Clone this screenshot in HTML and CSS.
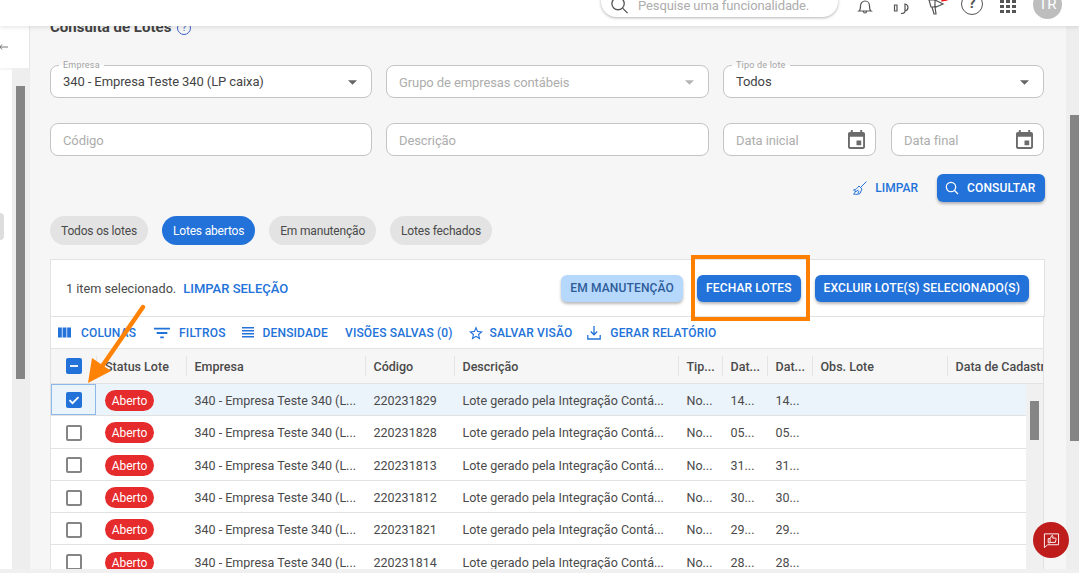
FILE: index.html
```html
<!DOCTYPE html>
<html lang="pt-BR">
<head>
    <meta charset="UTF-8">
    <title>Consulta de Lotes</title>
    <link rel="stylesheet" href="styles.css">
</head>
<body>
    <header class="topbar">
        <div class="search-box">
            <svg class="search-icon" viewBox="0 0 20 20"><circle cx="8.5" cy="8" r="6.5"/><path d="M13.5 13l5 5"/></svg>
            <span>Pesquise uma funcionalidade.</span>
        </div>
        <svg class="top-icon bell" viewBox="0 0 16 14"><path d="M2 11c1.500-1 1.500-3 1.500-5 0-3 2-5 4.500-5s4.500 2 4.500 5c0 2 0 4 1.500 5zM6.500 11.500c0 2 3 2 3 0"/></svg>
        <svg class="top-icon headset" viewBox="0 0 16 14"><path d="M1.500 5h2.500v6H1.500zM12 4c2 .5 3 2 3 3.500s-1 3-3 3.500zM12 11c0 2-2 2.500-4 2.500"/></svg>
        <svg class="top-icon horn" viewBox="0 0 22 15"><path d="M1 0h6v6l-1 1H3zM7 0l8 4v0l-7 3-1-1M4 7l2 7h2l-1-7"/><path class="horn-dot" d="M14 1l5-1v-1h-5z"/></svg>
        <div class="help">?</div>
        <svg class="apps" viewBox="0 0 16 13"><path d="M0 0h4v3H0zM6 0h4v3H6zM12 0h4v3h-4zM0 5h4v3H0zM6 5h4v3H6zM12 5h4v3h-4zM0 10h4v3H0zM6 10h4v3H6zM12 10h4v3h-4z"/></svg>
        <div class="avatar">TR</div>
    </header>

    <div class="page">
        <aside class="sidebar">
            <div class="side-head">
                <svg class="back-icon" viewBox="0 0 8 8"><path d="M0 4h8M2 1.500L0 4l2 2.500"/></svg>
            </div>
            <div class="side-body">
                <div class="side-list"><span class="side-item"></span></div>
                <div class="side-track"><div class="side-thumb"></div></div>
            </div>
        </aside>

        <main class="content">
            <h1 class="title">Consulta de Lotes <span class="info">?</span></h1>

            <div class="form-row">
                <div class="field">
                    <label>Empresa</label>
                    <span class="value">340 - Empresa Teste 340 (LP caixa)</span>
                    <svg class="caret" viewBox="0 0 10 5"><path d="M0 0h10L5 5z"/></svg>
                </div>
                <div class="field">
                    <span class="placeholder">Grupo de empresas contábeis</span>
                    <svg class="caret muted" viewBox="0 0 10 5"><path d="M0 0h10L5 5z"/></svg>
                </div>
                <div class="field">
                    <label>Tipo de lote</label>
                    <span class="value">Todos</span>
                    <svg class="caret" viewBox="0 0 10 5"><path d="M0 0h10L5 5z"/></svg>
                </div>
            </div>

            <div class="form-row">
                <div class="field"><span class="placeholder">Código</span></div>
                <div class="field"><span class="placeholder">Descrição</span></div>
                <div class="date-pair">
                    <div class="field">
                        <span class="placeholder">Data inicial</span>
                        <svg class="calendar" viewBox="3 1 18 20"><path d="M17 12h-5v5h5v-5zM16 1v2H8V1H6v2H5c-1.110 0-1.990.9-1.990 2L3 19c0 1.100.89 2 2 2h14c1.100 0 2-.9 2-2V5c0-1.100-.9-2-2-2h-1V1h-2zm3 18H5V8h14v11z"/></svg>
                    </div>
                    <div class="field">
                        <span class="placeholder">Data final</span>
                        <svg class="calendar" viewBox="3 1 18 20"><path d="M17 12h-5v5h5v-5zM16 1v2H8V1H6v2H5c-1.110 0-1.990.9-1.990 2L3 19c0 1.100.89 2 2 2h14c1.100 0 2-.9 2-2V5c0-1.100-.9-2-2-2h-1V1h-2zm3 18H5V8h14v11z"/></svg>
                    </div>
                </div>
            </div>

            <div class="form-actions">
                <a class="clear-link">
                    <svg class="broom" viewBox="0 0 14 14"><path d="M13.500.5L8 6M6 5l3 3-2 4.500c-2 1-4 1-6.500.5 1.200-.8 2-1.800 2.300-3-1 0-1.800-.2-2.300-1 2.500 0 4-2.500 5.500-4zM3 10.500l2.500-1.500M5 12.500l1-2.500"/></svg>
                    LIMPAR
                </a>
                <button class="btn btn-search">
                    <svg class="btn-icon" viewBox="0 0 14 14"><circle cx="6" cy="6" r="4.700"/><path d="M9.500 9.500L13 13"/></svg>
                    CONSULTAR
                </button>
            </div>

            <div class="chips">
                <span class="chip">Todos os lotes</span>
                <span class="chip active">Lotes abertos</span>
                <span class="chip">Em manutenção</span>
                <span class="chip">Lotes fechados</span>
            </div>

            <div class="selection-bar">
                <span class="selected-text">1 item selecionado.</span>
                <a class="clear-selection">LIMPAR SELEÇÃO</a>
                <div class="bulk-actions">
                    <button class="btn btn-light">EM MANUTENÇÃO</button>
                    <button class="btn">FECHAR LOTES</button>
                    <button class="btn">EXCLUIR LOTE(S) SELECIONADO(S)</button>
                </div>
            </div>

            <div class="grid">
                <div class="toolbar">
                    <a class="tool tool-columns"><svg viewBox="4 5 17 13"><path d="M10 18h5V5h-5v13zm-6 0h5V5H4v13zM16 5v13h5V5h-5z"/></svg>COLUNAS</a>
                    <a class="tool tool-filter"><svg viewBox="3 6 18 12"><path d="M10 18h4v-2h-4v2zM3 6v2h18V6H3zm3 7h12v-2H6v2z"/></svg>FILTROS</a>
                    <a class="tool tool-density"><svg viewBox="0 0 12 11"><path d="M0 0h12v1.400H0zM0 3h12v1.400H0zM0 6h12v1.400H0zM0 9h12v1.400H0z"/></svg>DENSIDADE</a>
                    <a class="tool tool-views">VISÕES SALVAS (0)</a>
                    <a class="tool tool-star"><svg viewBox="2 2 20 19"><path d="M22 9.240l-7.190-.62L12 2 9.190 8.630 2 9.240l5.460 4.730L5.820 21 12 17.270 18.180 21l-1.630-7.030L22 9.240zM12 15.400l-3.760 2.270 1-4.280-3.320-2.880 4.380-.38L12 6.100l1.710 4.040 4.380.38-3.320 2.880 1 4.280L12 15.400z"/></svg>SALVAR VISÃO</a>
                    <a class="tool tool-report"><svg viewBox="0 0 14 14"><path class="line" d="M7 0v8.500M3.800 5.500L7 8.800l3.200-3.300M.8 9v4h12.400V9"/></svg>GERAR RELATÓRIO</a>
                </div>

                <div class="grid-head">
                    <div class="cell c-check"><span class="box box-on"><svg viewBox="0 0 16 16"><path class="mark" d="M4 8h8"/></svg></span></div>
                    <div class="cell c-status">Status Lote</div>
                    <div class="cell c-company">Empresa</div>
                    <div class="cell c-code">Código</div>
                    <div class="cell c-desc">Descrição</div>
                    <div class="cell c-type">Tip...</div>
                    <div class="cell c-date">Dat...</div>
                    <div class="cell c-date">Dat...</div>
                    <div class="cell c-obs">Obs. Lote</div>
                    <div class="cell c-created">Data de Cadastro</div>
                </div>

                <div class="grid-body">
                    <div class="rows">
                        <div class="row selected">
                            <div class="cell c-check focused"><span class="box box-on"><svg viewBox="0 0 16 16"><path class="mark" d="M3.500 8.200l3 3 6-6"/></svg></span></div>
                            <div class="cell c-status"><span class="badge">Aberto</span></div>
                            <div class="cell c-company">340 - Empresa Teste 340 (L...</div>
                            <div class="cell c-code">220231829</div>
                            <div class="cell c-desc">Lote gerado pela Integração Contá...</div>
                            <div class="cell c-type">No...</div>
                            <div class="cell c-date">14...</div>
                            <div class="cell c-date">14...</div>
                        </div>
                        <div class="row">
                            <div class="cell c-check"><span class="box"></span></div>
                            <div class="cell c-status"><span class="badge">Aberto</span></div>
                            <div class="cell c-company">340 - Empresa Teste 340 (L...</div>
                            <div class="cell c-code">220231828</div>
                            <div class="cell c-desc">Lote gerado pela Integração Contá...</div>
                            <div class="cell c-type">No...</div>
                            <div class="cell c-date">05...</div>
                            <div class="cell c-date">05...</div>
                        </div>
                        <div class="row">
                            <div class="cell c-check"><span class="box"></span></div>
                            <div class="cell c-status"><span class="badge">Aberto</span></div>
                            <div class="cell c-company">340 - Empresa Teste 340 (L...</div>
                            <div class="cell c-code">220231813</div>
                            <div class="cell c-desc">Lote gerado pela Integração Contá...</div>
                            <div class="cell c-type">No...</div>
                            <div class="cell c-date">31...</div>
                            <div class="cell c-date">31...</div>
                        </div>
                        <div class="row">
                            <div class="cell c-check"><span class="box"></span></div>
                            <div class="cell c-status"><span class="badge">Aberto</span></div>
                            <div class="cell c-company">340 - Empresa Teste 340 (L...</div>
                            <div class="cell c-code">220231812</div>
                            <div class="cell c-desc">Lote gerado pela Integração Contá...</div>
                            <div class="cell c-type">No...</div>
                            <div class="cell c-date">30...</div>
                            <div class="cell c-date">30...</div>
                        </div>
                        <div class="row">
                            <div class="cell c-check"><span class="box"></span></div>
                            <div class="cell c-status"><span class="badge">Aberto</span></div>
                            <div class="cell c-company">340 - Empresa Teste 340 (L...</div>
                            <div class="cell c-code">220231821</div>
                            <div class="cell c-desc">Lote gerado pela Integração Contá...</div>
                            <div class="cell c-type">No...</div>
                            <div class="cell c-date">29...</div>
                            <div class="cell c-date">29...</div>
                        </div>
                        <div class="row">
                            <div class="cell c-check"><span class="box"></span></div>
                            <div class="cell c-status"><span class="badge">Aberto</span></div>
                            <div class="cell c-company">340 - Empresa Teste 340 (L...</div>
                            <div class="cell c-code">220231814</div>
                            <div class="cell c-desc">Lote gerado pela Integração Contá...</div>
                            <div class="cell c-type">No...</div>
                            <div class="cell c-date">28...</div>
                            <div class="cell c-date">28...</div>
                        </div>
                    </div>
                    <div class="grid-track"><div class="grid-thumb"></div></div>
                </div>
            </div>
        </main>

        <div class="page-track"><div class="page-thumb"></div></div>
    </div>

    <div class="bottom-strip"></div>

    <!-- marks drawn over the screen -->
    <div class="highlight"></div>
    <svg class="arrow" viewBox="0 0 70 90">
        <path class="arrow-line" d="M58 4L18 62"/>
        <path class="arrow-head" d="M3 80L7 55L26 68z"/>
    </svg>

    <div class="chat-fab">
        <svg viewBox="0 0 18 18"><path class="line" d="M1.500 2h15v11.500H5L1.500 16.500z"/><path class="line" d="M5.500 7h2v4.500h-2zM7.500 7l2-3.500c1 0 1.200 1 .8 3h3c.7 0 .7 1 .5 1.500l-.8 3h-5.500"/></svg>
    </div>
</body>
</html>
```

FILE: styles.css
```css
* {
    box-sizing: border-box;
}
html, body {
    margin: 0;
    height: 573px;
    overflow: hidden;
}
body {
    font-family: Roboto, "Liberation Sans", sans-serif;
    font-size: 13px;
    color: #4a4a4a;
    background-color: #f0f0f0;
}

/* top bar */
.topbar {
    position: absolute;
    top: 0;
    left: 0;
    right: 0;
    height: 26px;
    z-index: 3;
    background-color: #fff;
    box-shadow: 0 1px 5px rgba(0, 0, 0, 0.12);
    overflow: hidden;
}
.search-box {
    position: absolute;
    left: 601px;
    top: -14px;
    width: 237px;
    height: 31px;
    display: flex;
    align-items: flex-end;
    padding: 0 0 4px 9px;
    gap: 9px;
    background-color: #fff;
    border-radius: 16px;
    box-shadow: 0 1px 3px rgba(0, 0, 0, 0.3);
    color: #adadad;
    font-size: 13px;
    letter-spacing: -0.1px;
}
.search-icon {
    width: 19px;
    height: 19px;
    margin-bottom: -2px;
    fill: none;
    stroke: #555;
    stroke-width: 1.4;
}
.top-icon {
    position: absolute;
    top: 0;
    fill: none;
    stroke: #555;
    stroke-width: 1.2;
}
.bell {
    left: 857px;
    width: 16px;
    height: 14px;
}
.headset {
    left: 893px;
    width: 16px;
    height: 14px;
}
.horn {
    left: 928px;
    width: 22px;
    height: 15px;
}
.horn-dot {
    fill: #f01414;
    stroke: #f01414;
}
.help {
    position: absolute;
    left: 961px;
    top: -7px;
    width: 22px;
    height: 22px;
    border: 1.5px solid #555;
    border-radius: 50%;
    text-align: center;
    line-height: 19px;
    font-size: 15px;
    font-weight: 700;
    color: #555;
}
.apps {
    position: absolute;
    left: 1000px;
    top: 0;
    width: 16px;
    height: 13px;
    fill: #555;
}
.avatar {
    position: absolute;
    left: 1033px;
    top: -10px;
    width: 29px;
    height: 29px;
    border-radius: 50%;
    background-color: #bdbdbd;
    color: #fff;
    font-size: 15px;
    line-height: 29px;
    text-align: center;
}

/* page frame */
.page {
    display: flex;
    height: 569px;
    overflow: hidden;
}
.bottom-strip {
    height: 4px;
    background-color: #f0f0f0;
}
.sidebar {
    width: 30px;
    flex-shrink: 0;
    display: flex;
    flex-direction: column;
    background-color: #fff;
    border-right: 1px solid #ececec;
}
.side-head {
    height: 68px;
    padding-top: 43px;
    background-color: #fff;
    box-shadow: 0 1px 3px rgba(0, 0, 0, 0.08);
}
.back-icon {
    display: block;
    width: 8px;
    height: 8px;
    fill: none;
    stroke: #777;
    stroke-width: 1;
}
.side-body {
    flex: 1;
    display: flex;
}
.side-list {
    width: 12px;
    padding-top: 145px;
}
.side-item {
    display: block;
    width: 4px;
    height: 27px;
    background-color: #ddd;
    border-radius: 0 4px 4px 0;
}
.side-track {
    flex: 1;
    padding: 18px 0 0 4px;
    background-color: #eee;
}
.side-thumb {
    width: 9px;
    height: 293px;
    background-color: #858585;
}
.content {
    flex: 1;
    padding: 18px 21px 0 20px;
    background-color: #f6f6f6;
    overflow: hidden;
}
.page-track {
    width: 13px;
    flex-shrink: 0;
    padding: 115px 0 0 4px;
    background-color: #eee;
}
.page-thumb {
    width: 9px;
    height: 326px;
    background-color: #858585;
}

/* filters */
.title {
    margin: 0 0 31px;
    height: 16px;
    font-size: 15px;
    line-height: 18px;
    font-weight: 700;
    color: #444;
}
.info {
    display: inline-block;
    width: 14px;
    height: 14px;
    margin-left: 2px;
    border: 1px solid #3f5fc9;
    border-radius: 50%;
    color: #3f5fc9;
    font-size: 10px;
    line-height: 12px;
    font-weight: 400;
    text-align: center;
    vertical-align: 1px;
}
.form-row {
    display: grid;
    grid-template-columns: 322px 323px 321px;
    gap: 14px;
    margin-bottom: 25px;
}
.date-pair {
    display: grid;
    grid-template-columns: 153px 153px;
    gap: 15px;
}
.field {
    position: relative;
    height: 33px;
    display: flex;
    align-items: center;
    padding: 0 12px;
    background-color: #fff;
    border: 1px solid #c4c4c4;
    border-radius: 8px;
}
.field label {
    position: absolute;
    left: 8px;
    top: -6px;
    padding: 0 4px;
    font-size: 9px;
    line-height: 10px;
    letter-spacing: 0.2px;
    color: #a3a3a3;
    background: linear-gradient(#f6f6f6 50%, #fff 50%);
}
.value {
    color: #444;
    font-size: 13px;
    letter-spacing: -0.1px;
}
.placeholder {
    padding-top: 2px;
    color: #adadad;
    font-size: 13px;
    letter-spacing: -0.1px;
}
.caret {
    position: absolute;
    right: 14px;
    top: 14px;
    width: 9px;
    height: 5px;
    fill: #666;
}
.caret.muted {
    fill: #b5b5b5;
}
.calendar {
    position: absolute;
    right: 10px;
    top: 6px;
    width: 17px;
    height: 19px;
    fill: #6b6b6b;
}
.form-actions {
    display: flex;
    justify-content: flex-end;
    align-items: center;
    gap: 19px;
    margin-top: -7px;
    height: 28px;
}
.clear-link {
    display: flex;
    align-items: center;
    gap: 8px;
    color: #2272d9;
    font-size: 12px;
    font-weight: 500;
}
.broom {
    width: 14px;
    height: 14px;
    fill: none;
    stroke: #2272d9;
    stroke-width: 1;
}
.btn {
    height: 27px;
    padding: 0 9px;
    border: none;
    border-radius: 6px;
    background-color: #2272d9;
    color: #fff;
    font-family: inherit;
    font-size: 12px;
    font-weight: 500;
    letter-spacing: 0.15px;
    box-shadow: 0 2px 3px rgba(0, 0, 0, 0.28);
}
.btn-search {
    height: 28px;
    width: 108px;
    display: flex;
    align-items: center;
    gap: 8px;
    padding: 0 8px;
}
.btn-icon {
    width: 14px;
    height: 14px;
    fill: none;
    stroke: #fff;
    stroke-width: 1.2;
}
.btn-light {
    background-color: #b6d8fd;
    color: #2d5c99;
}

/* status chips */
.chips {
    display: flex;
    gap: 14px;
    margin-top: 14px;
}
.chip {
    height: 29px;
    line-height: 30px;
    padding: 0 11px;
    border-radius: 15px;
    background-color: #e3e3e3;
    color: #4a4a4a;
    font-size: 12px;
    letter-spacing: -0.18px;
}
.chip.active {
    background-color: #2272d9;
    color: #fff;
}

/* selection */
.selection-bar {
    display: flex;
    align-items: center;
    height: 58px;
    margin-top: 14px;
    padding: 0 15px;
    background-color: #fff;
    border: 1px solid #e2e2e2;
}
.selected-text {
    font-size: 12.7px;
}
.clear-selection {
    margin-left: 7px;
    color: #2272d9;
    font-size: 13px;
    font-weight: 500;
}
.bulk-actions {
    display: flex;
    gap: 14px;
    margin-left: auto;
}

/* table */
.grid {
    width: 994px;
    height: 252px;
    border-left: 1px solid #e2e2e2;
    border-right: 1px solid #e2e2e2;
    overflow: hidden;
}
.toolbar {
    display: flex;
    align-items: center;
    height: 32px;
    background-color: #fff;
    border-bottom: 1px solid #e2e2e2;
}
.tool {
    display: flex;
    align-items: center;
    color: #2272d9;
    font-size: 12px;
    font-weight: 500;
    letter-spacing: 0.15px;
    white-space: nowrap;
}
.tool svg {
    fill: #2272d9;
}
.tool .line {
    fill: none;
    stroke: #2272d9;
    stroke-width: 1.3;
}
.tool-columns {
    margin-left: 7px;
}
.tool-columns svg {
    width: 13px;
    height: 11px;
    margin-right: 10px;
}
.tool-filter {
    margin-left: 18px;
}
.tool-filter svg {
    width: 16px;
    height: 12px;
    margin-right: 9px;
}
.tool-density {
    margin-left: 16px;
}
.tool-density svg {
    width: 12px;
    height: 11px;
    margin-right: 9px;
}
.tool-views {
    margin-left: 17px;
}
.tool-star {
    margin-left: 16px;
}
.tool-star svg {
    width: 14px;
    height: 14px;
    margin-right: 7px;
}
.tool-report {
    margin-left: 15px;
}
.tool-report svg {
    width: 14px;
    height: 14px;
    margin-right: 9px;
}
.grid-head {
    display: flex;
    height: 35px;
    white-space: nowrap;
    overflow: hidden;
    border-bottom: 1px solid #e2e2e2;
    background-color: #f6f6f6;
    font-weight: 500;
    font-size: 12.5px;
}
.grid-head .cell {
    position: relative;
}
.grid-head .cell + .cell::before {
    content: "";
    position: absolute;
    left: 0;
    top: 7px;
    bottom: 7px;
    width: 1px;
    background-color: #e4e4e4;
}
.cell {
    display: flex;
    align-items: center;
    flex-shrink: 0;
    padding-left: 9px;
    white-space: nowrap;
}
.c-check {
    width: 45px;
    padding-left: 15px;
}
.c-status {
    width: 89.5px;
}
.c-company {
    width: 179px;
}
.c-code {
    width: 89px;
}
.c-desc {
    width: 224px;
}
.c-type {
    width: 44px;
}
.c-date {
    width: 45px;
}
.c-obs {
    width: 135px;
}
.c-created {
    width: 130px;
}
.grid-body {
    display: flex;
}
.rows {
    flex: 1;
    background-color: #fff;
}
.row {
    display: flex;
    height: 32.3px;
    border-bottom: 1px solid #e2e2e2;
    font-size: 12.5px;
}
.row .cell {
    padding-top: 2px;
}
.row.selected {
    background-color: #ebf3fb;
}
.row .focused {
    border: 1px solid #8db8e8;
    padding-left: 14px;
    padding-top: 1px;
}
.box {
    display: block;
    width: 16px;
    height: 16px;
    border: 2px solid #858585;
    border-radius: 2px;
}
.box-on {
    border: none;
    background-color: #2272d9;
}
.box-on svg {
    display: block;
    width: 16px;
    height: 16px;
}
.mark {
    fill: none;
    stroke: #fff;
    stroke-width: 1.8;
}
.badge {
    display: block;
    width: 49px;
    height: 21px;
    line-height: 22px;
    border-radius: 11px;
    background-color: #e52b2b;
    color: #fff;
    font-size: 12px;
    letter-spacing: -0.1px;
    text-align: center;
}
.grid-track {
    width: 17px;
    flex-shrink: 0;
    padding: 17px 0 0 4px;
    background-color: #f0f0f0;
}
.grid-thumb {
    width: 9px;
    height: 39px;
    background-color: #858585;
}

/* annotations lying over the screen */
.highlight {
    position: absolute;
    left: 691px;
    top: 255px;
    width: 119px;
    height: 66px;
    border: 4px solid #ff7f00;
    z-index: 2;
}
.arrow {
    position: absolute;
    left: 85px;
    top: 303px;
    width: 70px;
    height: 90px;
    z-index: 2;
}
.arrow-line {
    fill: none;
    stroke: #ff8205;
    stroke-width: 4.5;
    stroke-linecap: round;
}
.arrow-head {
    fill: #ff8205;
}
.chat-fab {
    position: absolute;
    left: 1033px;
    top: 522px;
    width: 36px;
    height: 36px;
    display: flex;
    align-items: center;
    justify-content: center;
    border-radius: 50%;
    background-color: #bf1c1c;
    z-index: 2;
}
.chat-fab svg {
    width: 17px;
    height: 17px;
}
.chat-fab .line {
    fill: none;
    stroke: #fff;
    stroke-width: 1;
}
```
